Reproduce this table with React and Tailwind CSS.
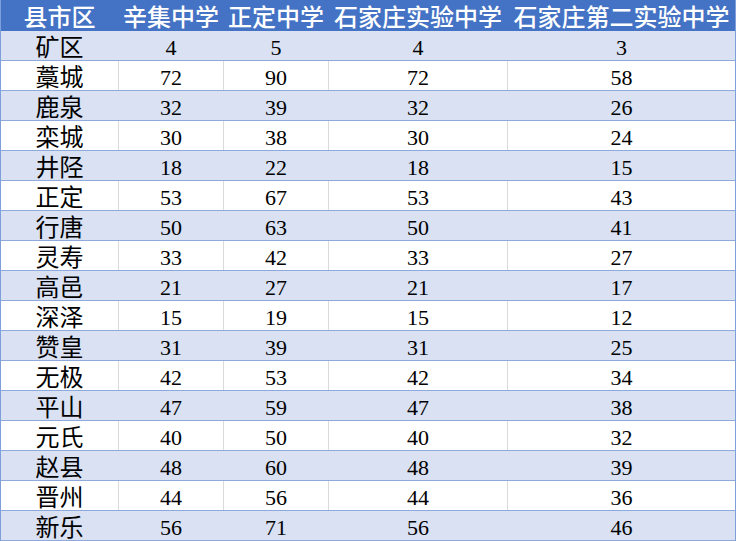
import React from "react";

const rows = [
  ["矿区", 4, 5, 4, 3],
  ["藁城", 72, 90, 72, 58],
  ["鹿泉", 32, 39, 32, 26],
  ["栾城", 30, 38, 30, 24],
  ["井陉", 18, 22, 18, 15],
  ["正定", 53, 67, 53, 43],
  ["行唐", 50, 63, 50, 41],
  ["灵寿", 33, 42, 33, 27],
  ["高邑", 21, 27, 21, 17],
  ["深泽", 15, 19, 15, 12],
  ["赞皇", 31, 39, 31, 25],
  ["无极", 42, 53, 42, 34],
  ["平山", 47, 59, 47, 38],
  ["元氏", 40, 50, 40, 32],
  ["赵县", 48, 60, 48, 39],
  ["晋州", 44, 56, 44, 36],
  ["新乐", 56, 71, 56, 46],
];

const headers = ["县市区", "辛集中学", "正定中学", "石家庄实验中学", "石家庄第二实验中学"];
const widths = ["w-[118px]", "w-[105px]", "w-[105px]", "w-[179px]", "w-[227px]"];

const cjk = { fontFamily: '"Noto Sans CJK SC", sans-serif' };
const serif = { fontFamily: '"Liberation Serif", "Noto Sans CJK SC", serif' };

export default function App() {
  return (
    <div className="w-[737px] h-[541px] bg-white">
      <div className="w-[736px] border-l border-r border-[#7f9fda]">
        <div className="flex h-[31px] bg-[#4472C4]">
          {headers.map((h, i) => (
            <div
              key={i}
              className={`${widths[i]} shrink-0 flex justify-center whitespace-nowrap text-white font-medium text-[24px] leading-[31px] ${i < 4 ? "border-r border-[#4472C4]" : ""}`}
              style={cjk}
            >
              {h}
            </div>
          ))}
        </div>
        {rows.map((r, ri) => {
          const light = ri % 2 === 0;
          return (
            <div
              key={ri}
              className={`flex h-[30px] border-b border-[#8EA9DB] ${light ? "bg-[#D9E1F2]" : "bg-white"}`}
            >
              {r.map((c, ci) => (
                <div
                  key={ci}
                  className={`${widths[ci]} shrink-0 flex justify-center whitespace-nowrap text-black ${
                    ci < 4 ? (light ? "border-r border-[#D9E1F2]" : "border-r border-[#dadada]") : ""
                  } ${ci === 0 ? "text-[24px] leading-[29px]" : "text-[22px] leading-[29px] pt-[2px]"}`}
                  style={ci === 0 ? cjk : serif}
                >
                  {c}
                </div>
              ))}
            </div>
          );
        })}
      </div>
    </div>
  );
}
